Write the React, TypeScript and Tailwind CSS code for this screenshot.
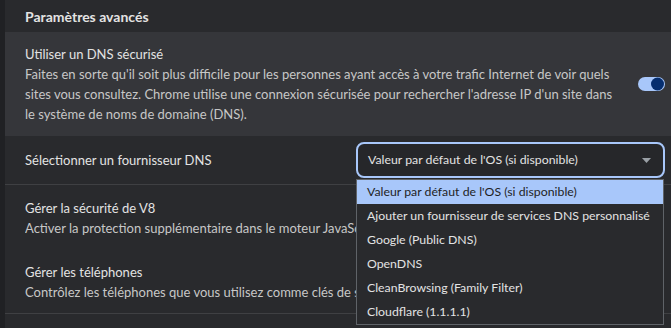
const options = [
  "Valeur par défaut de l'OS (si disponible)",
  "Ajouter un fournisseur de services DNS personnalisé",
  "Google (Public DNS)",
  "OpenDNS",
  "CleanBrowsing (Family Filter)",
  "Cloudflare (1.1.1.1)",
]

function Toggle() {
  return (
    <div className="relative w-[27px] h-[14px] rounded-full bg-[#a8c7fa] shrink-0">
      <div className="absolute right-[1px] top-1/2 -translate-y-1/2 w-[13px] h-[13px] rounded-full bg-[#062e6f]"></div>
    </div>
  )
}

// the dropdown hides the end of these lines, so clip them where it starts
function SettingRow({ title, desc }: { title: string; desc: string }) {
  return (
    <div className="h-[64px] pt-[13px] pl-[20px]">
      <div className="text-[#e3e3e3] leading-[20px]">{title}</div>
      <div className="text-[#c7c7c7] leading-[20px] w-[332px] overflow-hidden">{desc}</div>
    </div>
  )
}

export default function App() {
  return (
    <div
      className="flex w-full h-[328px] overflow-hidden text-[13px] whitespace-nowrap"
      style={{ fontFamily: 'Lato, "Noto Sans", sans-serif' }}
    >
      <div className="w-[5px] bg-[#202124] shrink-0"></div>
      <main className="flex-1 min-w-0 bg-[#292a2d] flex flex-col">
        <div className="h-[32px] shrink-0 flex items-center px-[20px] text-[14px] font-bold text-[#e3e3e3]">
          Paramètres avancés
        </div>

        <div className="h-[104px] shrink-0 bg-[#35363a] flex items-center pl-[20px] pr-[6px]">
          <div className="flex-1">
            <div className="text-[#e3e3e3] leading-[20px]">Utiliser un DNS sécurisé</div>
            <div className="text-[#c7c7c7] leading-[20px]">
              <div>Faites en sorte qu'il soit plus difficile pour les personnes ayant accès à votre trafic Internet de voir quels</div>
              <div>sites vous consultez. Chrome utilise une connexion sécurisée pour rechercher l'adresse IP d'un site dans</div>
              <div>le système de noms de domaine (DNS).</div>
            </div>
          </div>
          <Toggle />
        </div>

        <div className="h-[49px] shrink-0 flex items-start justify-between pl-[20px] pr-[6px] border-b border-[#3f4043]">
          <div className="text-[#e3e3e3] leading-[20px] mt-[14px]">Sélectionner un fournisseur DNS</div>
          <div className="relative mt-[6px] w-[309px] text-[12.3px]">
            <div className="h-[36px] rounded-[8px] border-2 border-[#a8c7fa] bg-[#26272a] flex items-center justify-between pl-[10px] pr-[12px]">
              <span className="text-[#e3e3e3]">Valeur par défaut de l'OS (si disponible)</span>
              <svg width="9" height="5" viewBox="0 0 9 5">
                <path d="M0 0 L9 0 L4.5 5 Z" fill="#9aa0a6" />
              </svg>
            </div>
            <div className="absolute left-0 top-[37px] w-[308px] z-10 bg-[#292a2d] border border-[#5f6368]">
              {options.map((o, i) => (
                <div
                  key={o}
                  className={
                    i === 0
                      ? "h-[24px] flex items-center pl-[10px] bg-[#a8c7fa] text-[#1f1f1f]"
                      : "h-[24px] flex items-center pl-[10px] text-[#e3e3e3]"
                  }
                >
                  {o}
                </div>
              ))}
            </div>
          </div>
        </div>

        <div className="shrink-0 border-b border-[#3f4043]">
          <SettingRow
            title="Gérer la sécurité de V8"
            desc="Activer la protection supplémentaire dans le moteur JavaScript de Chrome"
          />
          <SettingRow
            title="Gérer les téléphones"
            desc="Contrôlez les téléphones que vous utilisez comme clés de sécurité"
          />
        </div>
        <div className="flex-1"></div>
      </main>
    </div>
  )
}
